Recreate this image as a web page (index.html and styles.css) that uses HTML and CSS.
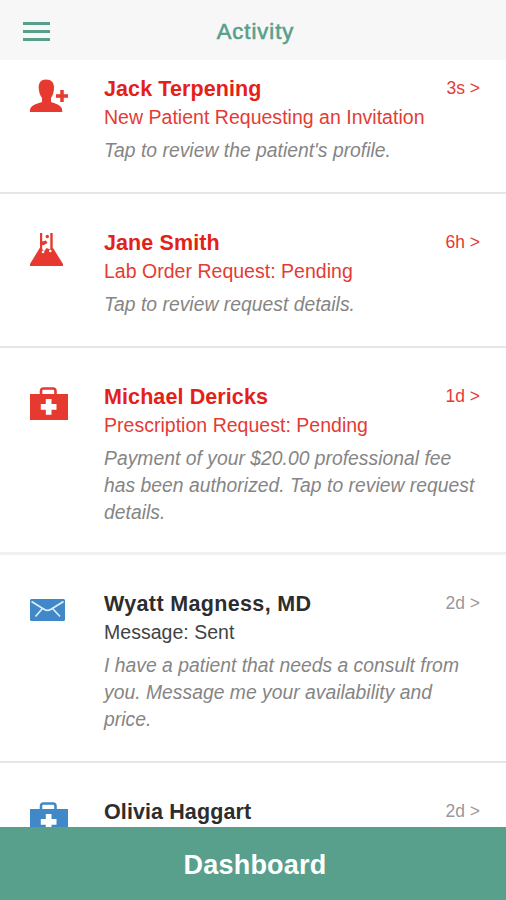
FILE: index.html
```
<!DOCTYPE html>
<html lang="en">
<head>
<meta charset="utf-8">
<title>Activity</title>
<link rel="stylesheet" href="styles.css">
</head>
<body>
<svg class="defs" width="0" height="0">
  <symbol id="kit" viewBox="0 0 40 35">
    <path d="M12 8V5Q12 2.500 14.500 2.500H24Q26.500 2.500 26.500 5V8" fill="none" stroke="currentColor" stroke-width="2.600"/>
    <path d="M1 8H39V34H1Z" fill="currentColor"/>
    <path d="M16.800 13h5.700v5h5v5.700h-5v5h-5.700v-5h-5v-5.700h5Z" fill="#fff"/>
  </symbol>
</svg>
<div class="screen">
  <header class="header">
    <button class="menu" aria-label="Menu"><span></span><span></span><span></span></button>
    <h1 class="title">Activity</h1>
  </header>
  <main class="list">
    <article class="row urgent first">
      <svg class="icon" width="40" height="35" viewBox="0 0 40 35"><path d="M17 1.500C22.500 1.500 25 4.500 25 9.500C25 14 24 17 22 20V24C25 25.500 33 26.500 33.200 32V34H1V32C1.200 26.500 10 25.500 13 24V20C11 17 9.700 14 9.700 9.500C9.700 4.500 12 1.500 17 1.500Z" fill="currentColor"/><path d="M33 12v12M27 18h12" stroke="currentColor" stroke-width="3.500"/></svg>
      <div class="content">
        <div class="top"><h2 class="name">Jack Terpening</h2><span class="time">3s &gt;</span></div>
        <p class="subject">New Patient Requesting an Invitation</p>
        <p class="body">Tap to review the patient's profile.</p>
      </div>
    </article>
    <article class="row urgent">
      <svg class="icon" width="40" height="35" viewBox="0 0 40 35"><path d="M11 1H13.200V17L15 19.500L17.500 16L21.300 17.500V1H23.700V15.500L34 32V34H1V32L11 15.500Z" fill="currentColor"/><circle cx="18.300" cy="4.500" r="1.700" fill="currentColor"/><path d="M13 9.500L17 8.500L18.500 11L15 13H13Z" fill="currentColor"/><circle cx="14" cy="20" r="1.300" fill="#fff"/><circle cx="21.300" cy="19" r="1.300" fill="#fff"/></svg>
      <div class="content">
        <div class="top"><h2 class="name">Jane Smith</h2><span class="time">6h &gt;</span></div>
        <p class="subject">Lab Order Request: Pending</p>
        <p class="body">Tap to review request details.</p>
      </div>
    </article>
    <article class="row urgent soft">
      <svg class="icon" width="40" height="35"><use href="#kit"/></svg>
      <div class="content">
        <div class="top"><h2 class="name">Michael Dericks</h2><span class="time">1d &gt;</span></div>
        <p class="subject">Prescription Request: Pending</p>
        <p class="body">Payment of your $20.00 professional fee<br>has been authorized. Tap to review request<br>details.</p>
      </div>
    </article>
    <article class="row">
      <svg class="icon" width="40" height="35" viewBox="0 0 40 35"><g transform="translate(0 5)"><rect x="1" y="1" width="35" height="22" rx="1.500" fill="currentColor"/><path d="M2.500 3.500L15 11.300Q18.500 13.500 22 11.300L34.500 3.500M13 11L6.500 18.500M24 11L31 18.500" fill="none" stroke="#dceef9" stroke-width="1.700"/></g></svg>
      <div class="content">
        <div class="top"><h2 class="name wide">Wyatt Magness, MD</h2><span class="time">2d &gt;</span></div>
        <p class="subject">Message: Sent</p>
        <p class="body">I have a patient that needs a consult from<br>you. Message me your availability and<br>price.</p>
      </div>
    </article>
    <article class="row">
      <svg class="icon" width="40" height="35"><use href="#kit"/></svg>
      <div class="content">
        <div class="top"><h2 class="name">Olivia Haggart</h2><span class="time">2d &gt;</span></div>
      </div>
    </article>
  </main>
  <button class="dashboard">Dashboard</button>
</div>
</body>
</html>
```

FILE: styles.css
```
* { box-sizing: border-box; margin: 0; padding: 0; }
body { font-family: "Liberation Sans", Arial, sans-serif; background: #fff; overflow: hidden; }
button { border: 0; background: none; font-family: inherit; }
.defs { display: block; }
.screen { display: flex; flex-direction: column; height: 900px; }
.header { flex: none; height: 60px; background: #f7f7f7; display: grid; grid-template-columns: 60px 1fr 60px; align-items: center; padding-top: 3px; }
.menu { display: flex; flex-direction: column; gap: 5.500px; width: 27px; margin-left: 23px; }
.menu span { height: 2.700px; background: #569f8b; }
.title { font-size: 22px; line-height: 28px; font-weight: 400; letter-spacing: 1px; -webkit-text-stroke: .6px #569f8b; color: #569f8b; text-align: center; padding-left: 5px; }
.list { flex: 1; min-height: 0; overflow: hidden; }
.row { display: flex; align-items: flex-start; padding: 35px 26px 28px 29px; border-bottom: 2px solid #e6e6e6; color: #4088c7; }
.row.first { padding-top: 15px; }
.row.soft { border-bottom: 3px solid #f0f0f0; padding-bottom: 26px; }
.row.urgent { color: #e6392f; }
.icon { flex: none; margin-top: 3px; }
.content { flex: 1; min-width: 0; padding-left: 35px; }
.top { display: flex; justify-content: space-between; height: 29px; }
.name { font-size: 21.500px; line-height: 28px; font-weight: 700; letter-spacing: .1px; color: #2d2d2d; }
.name.wide { letter-spacing: .35px; }
.time { font-size: 17.500px; line-height: 26px; color: #999; }
.subject { font-size: 19.500px; line-height: 27px; letter-spacing: .02px; color: #424242; white-space: nowrap; }
.body { font-size: 19.300px; line-height: 27px; margin-top: 6px; letter-spacing: .03px; font-style: italic; color: #858585; white-space: nowrap; }
.urgent .name { color: #e32119; }
.urgent .subject, .urgent .time { color: #e43b34; }
.dashboard { flex: none; height: 73px; background: #589f8c; color: #fff; font-size: 27px; font-weight: 700; letter-spacing: .2px; line-height: 73px; padding: 2px 0 0 4px; }
```
